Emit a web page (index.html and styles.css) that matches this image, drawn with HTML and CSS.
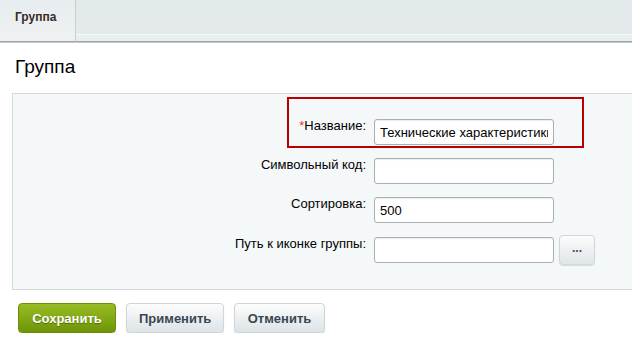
FILE: index.html
```html
<!DOCTYPE html>
<html lang="ru">
<head>
<meta charset="utf-8">
<title>Группа</title>
<link rel="stylesheet" href="styles.css">
</head>
<body>
<div class="tabbar">
  <div class="tab">Группа</div>
  <div class="tab-fill"></div>
</div>
<h1 class="title">Группа</h1>
<div class="panel">
  <div class="highlight"></div>
  <div class="row">
    <label class="label"><span class="req">*</span>Название:</label>
    <div class="field"><input class="input" type="text" value="Технические характеристики"></div>
  </div>
  <div class="row">
    <label class="label">Символьный код:</label>
    <div class="field"><input class="input" type="text" value=""></div>
  </div>
  <div class="row">
    <label class="label">Сортировка:</label>
    <div class="field"><input class="input" type="text" value="500"></div>
  </div>
  <div class="row row-btn">
    <label class="label label-btn">Путь к иконке группы:</label>
    <div class="field"><input class="input" type="text" value=""><button class="btn-dots">...</button></div>
  </div>
</div>
<div class="actions">
  <button class="btn btn-save">Сохранить</button>
  <button class="btn">Применить</button>
  <button class="btn">Отменить</button>
</div>
</body>
</html>
```

FILE: styles.css
```css
* { box-sizing: border-box; }
html, body { margin: 0; padding: 0; background: #fff; }
body {
  font-family: "Liberation Sans", Arial, sans-serif;
  font-size: 13px;
  color: #000;
  width: 632px;
  overflow: hidden;
}
.tabbar {
  display: flex;
  height: 43px;
  border-bottom: 1px solid #c4cacd;
}
.tabbar::after { content: none; }
.tab {
  width: 76px;
  height: 42px;
  border-right: 1px solid #c8cfd2;
  border-bottom: 1px solid #9ba4a8;
  background: linear-gradient(to bottom, #e7ecee, #eef2f3);
  font-weight: bold;
  font-size: 12px;
  color: #3a2a2a;
  padding: 10px 0 0 15px;
  line-height: 14px;
}
.tab-fill {
  flex: 1;
  height: 42px;
  border-bottom: 1px solid #9ba4a8;
  background: linear-gradient(to bottom, #e2e9eb 0, #e4eaec 34px, #f6f8f9 34px, #f6f8f9 35px, #e9eef0 35px);
}
.title {
  margin: 13px 0 15px 15px;
  font-size: 19px;
  font-weight: normal;
  line-height: 22px;
  color: #000;
}
.panel {
  position: relative;
  margin-left: 12px;
  background: #f5f8f9;
  border-top: 1px solid #d4d9dc;
  border-left: 1px solid #d4d9dc;
  border-bottom: 1px solid #d4d9dc;
  padding: 25px 0 24px;
  display: flex;
  flex-direction: column;
  gap: 13px;
}
.highlight {
  position: absolute;
  left: 274px;
  top: 3px;
  width: 297px;
  height: 51px;
  border: 2px solid #b80000;
}
.row {
  display: grid;
  grid-template-columns: 361px 1fr;
  align-items: start;
}
.row-btn { margin-top: -1px; }
.label {
  text-align: right;
  padding-right: 8px;
  line-height: 16px;
  margin-top: -1px;
  color: #000;
}
.label-btn { margin-top: 1px; }
.req { color: #f03535; }
.field {
  display: flex;
  align-items: center;
  gap: 5px;
}
.input {
  width: 180px;
  height: 26px;
  border: 1px solid #a8b0b5;
  border-radius: 3px;
  background: #fff;
  box-shadow: inset 0 1px 1px rgba(0,0,0,0.08);
  font-family: "Liberation Sans", Arial, sans-serif;
  font-size: 13px;
  color: #000;
  padding: 0 5px;
  margin: 0;
  outline: none;
}
.btn-dots {
  width: 36px;
  height: 30px;
  border: 1px solid #d0d6d9;
  border-radius: 4px;
  background: linear-gradient(to bottom, #fbfcfc, #dfe5e8);
  box-shadow: 0 1px 1px rgba(0,0,0,0.12);
  font-family: "Liberation Sans", Arial, sans-serif;
  font-size: 12px;
  font-weight: bold;
  color: #3d4a55;
  padding: 0 0 4px;
  margin: 0;
}
.actions {
  display: flex;
  gap: 10px;
  padding: 13px 0 0 18px;
}
.btn {
  height: 30px;
  padding: 0 12px;
  border: 1px solid #cfd5d8;
  border-radius: 4px;
  background: linear-gradient(to bottom, #fcfdfd, #dde3e6);
  box-shadow: 0 1px 1px rgba(0,0,0,0.15);
  font-family: "Liberation Sans", Arial, sans-serif;
  font-size: 13px;
  font-weight: bold;
  color: #3b4651;
  margin: 0;
}
.btn-save {
  width: 98px;
  border-color: #6c8f0a;
  background: linear-gradient(to bottom, #97bc23, #6f9508);
  color: #fff;
  text-shadow: 0 1px 1px rgba(0,0,0,0.35);
}
.btn:not(.btn-save) { width: 98px; }
.btn:last-child { width: 91px; }
```
